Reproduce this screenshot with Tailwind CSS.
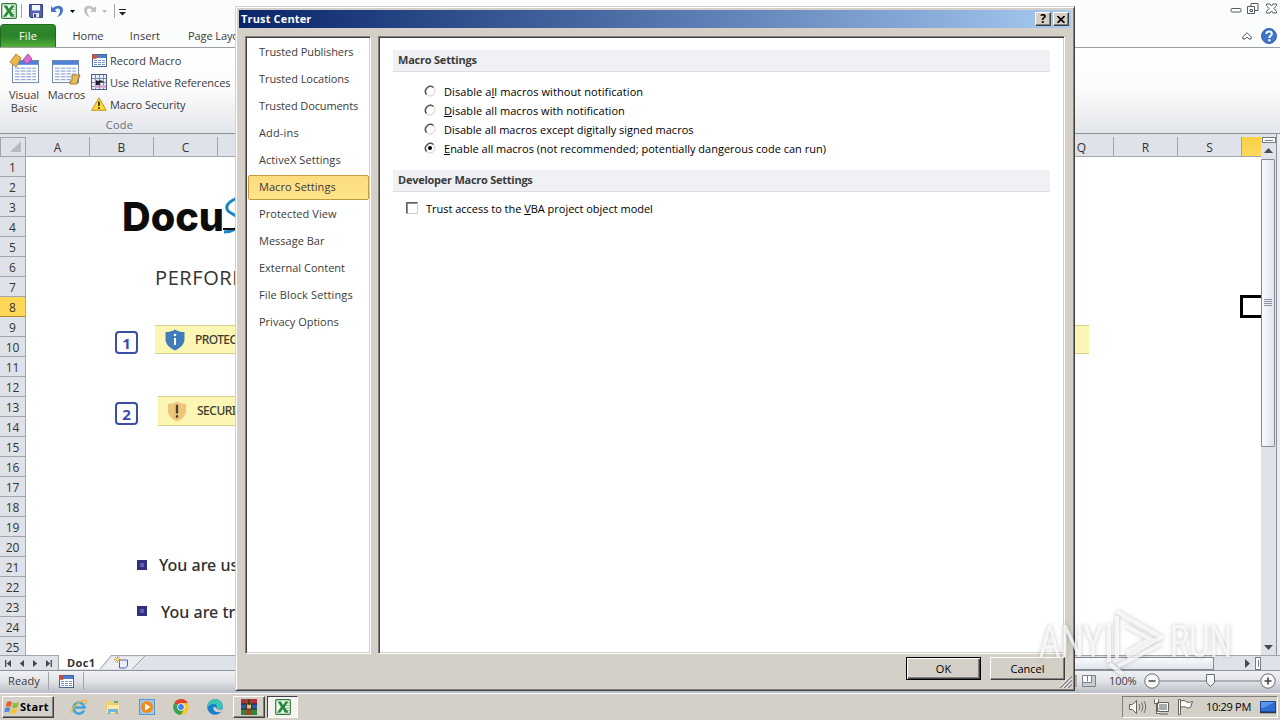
<!DOCTYPE html>
<html lang="en">
<head>
  <meta charset="UTF-8">
  <title>Trust Center</title>
  <script src="https://cdn.jsdelivr.net/npm/@tailwindcss/browser@4"></script>
</head>
<body class="relative w-[1280px] h-[720px] overflow-hidden bg-white font-['Open_Sans','Noto_Sans',sans-serif] text-[11px] text-[#3b3b3b]">
  <!-- shared icons -->
  <svg class="hidden">
    <symbol id="excel" viewBox="0 0 16 16">
      <rect x=".7" y=".7" width="14.6" height="14.6" rx="1" fill="#f1f8ef" stroke="#2c7a37" stroke-width="1.2"/>
      <path d="M11 4h3M11 6.500h3M11 9h3M11 11.500h3" stroke="#8cbd8f"/>
      <path d="M2.500 2.500h3.600l2 3.500 2.200-3.500h3.200L9.800 8l3.900 5.700h-3.800L7.700 10l-2.400 3.700H1.800L6 8z" fill="#278a3b"/>
    </symbol>
    <symbol id="table" viewBox="0 0 28 26">
      <rect x=".5" y=".5" width="27" height="23" fill="#fff" stroke="#6b82ab"/>
      <path d="M1 1h26v4H1z" fill="#4c83d8"/>
      <path d="M3 8.500h22M3 11.500h22M3 14.500h22M3 17.500h22M3 20.500h22" stroke="#7593c7" stroke-dasharray="5 1"/>
    </symbol>
    <symbol id="recmacro" viewBox="0 0 16 14">
      <rect x="1.500" y="1.500" width="14" height="12" fill="#fff" stroke="#45649b"/>
      <path d="M2 2h13v3H2z" fill="#4f80ce"/>
      <path d="M3 7.500h11M3 9.500h11M3 11.500h11" stroke="#7593c7" stroke-dasharray="3 1"/>
      <circle cx="3.500" cy="3.500" r="2.500" fill="#c8503c"/>
    </symbol>
    <symbol id="radio" viewBox="0 0 12 12">
      <circle cx="6" cy="6" r="5" fill="#fff" stroke="#d4d0c8"/>
      <path d="M2.500 9.500A5 5 0 0 1 9.500 2.500" fill="none" stroke="#555" stroke-width="1.500"/>
    </symbol>
  </svg>

  <div class="flex flex-col h-full">
    <!-- quick access bar -->
    <div class="flex justify-between h-6 bg-[#fbfcfc] shrink-0">
      <div class="flex items-center pl-px h-[22px]">
        <svg class="size-4" viewBox="0 0 16 16"><use href="#excel"/></svg>
        <i class="w-px h-3.5 ml-1 bg-[#a0a4aa]"></i>
        <svg class="size-[14px] ml-[7px]" viewBox="0 0 14 14"><path d="M.5.5h13v13h-12l-1-1z" fill="#5360b4" stroke="#34407f"/><path d="M3 1h8v5.500H3z" fill="#f2f5fb"/><path d="M4 9h6v4.500H4z" fill="#dfe4f0"/><path d="M5 10h2v3H5z" fill="#34407f"/></svg>
        <svg class="w-[13px] h-[13px] ml-2" viewBox="0 0 13 13"><path d="M0 1v6h6L4 5c2-2 5-2 5 1 0 2-1 4-3 6 4-1 6-4 6-7C12 1 7-1 2 3z" fill="#4675c9"/></svg>
        <svg class="w-[5px] h-[3px] ml-[6px]" viewBox="0 0 5 3"><path d="M0 0h5L2.500 3z" fill="#000"/></svg>
        <svg class="w-[13px] h-[13px] ml-2" viewBox="0 0 13 13"><path d="M13 1v6H7l2-2C7 3 4 3 4 6c0 2 1 4 3 6-4-1-6-4-6-7 0-4 5-6 10-2z" fill="#bfc1c5"/></svg>
        <svg class="w-[5px] h-[3px] ml-[6px]" viewBox="0 0 5 3"><path d="M0 0h5L2.500 3z" fill="#b9bbbf"/></svg>
        <i class="w-px h-3.5 ml-[7px] bg-[#a0a4aa]"></i>
        <svg class="w-[7px] h-[7px] ml-1 mt-0.5" viewBox="0 0 7 7"><path d="M0 .5h7" stroke="#222"/><path d="M0 3h7L3.500 6.500z" fill="#222"/></svg>
      </div>
      <svg class="w-[50px] h-[18px]" viewBox="0 0 50 18" fill="#fff" stroke="#555b64">
        <rect x="1" y="8.500" width="10" height="3.500" rx="1"/>
        <path d="M21 3.500h7v7h-7z"/><path d="M17.500 6.500h7v7h-7z"/><path d="M20 9.500h2.500v2H20z"/>
        <path d="M36.500 4h3.500l1.500 2 1.500-2h3.500v1.500L44 8.500l2.500 3V13H43l-1.500-2L40 13h-3.500v-1.500l2.500-3-2.500-3z"/>
      </svg>
    </div>

    <!-- ribbon tabs -->
    <div class="flex justify-between h-[23px] bg-[#fbfcfc] shrink-0">
      <div class="flex items-center">
        <div class="flex items-center justify-center w-14 h-[23px] rounded-t border border-b-0 border-[#216b22] bg-linear-to-b from-[#2e8a2d] via-[#2a8129] to-[#55b03c] text-white tracking-[.2px]">File</div>
        <span class="w-16 pt-0.5 text-center">Home</span>
        <span class="w-[50px] pt-0.5 text-center tracking-[.1px]">Insert</span>
        <span class="pl-[18px] pt-0.5 whitespace-nowrap tracking-[-.1px]">Page Layout</span>
      </div>
      <div class="flex items-center gap-[9px] pr-[3px]">
        <svg class="w-[10px] h-[8px]" viewBox="0 0 10 8"><path d="M5 .7 9.200 5v2H7L5 5 3 7H.8V5z" fill="#fff" stroke="#555b64"/></svg>
        <svg class="size-4" viewBox="0 0 16 16"><circle cx="8" cy="8" r="7.500" fill="#3f74cb" stroke="#3363af"/><path d="M5.300 6C5.300 2.500 11 2.600 10.800 6 10.700 8 8.300 7.800 8.300 10" stroke="#fff" stroke-width="2" fill="none"/><circle cx="8.300" cy="12.300" r="1.200" fill="#fff"/></svg>
      </div>
    </div>

    <!-- ribbon -->
    <div class="h-[87px] shrink-0 border-t border-[#9b9fa5] border-b border-b-[#8b9097] bg-linear-to-b from-white via-[#fbfbfc] to-[#e3e6ea]">
      <div class="flex w-[239px] leading-[13px]">
        <div class="w-12 pt-[5px] flex flex-col items-center text-center">
          <svg class="w-[32px] h-[32px]" viewBox="0 0 32 32">
            <svg x="4" y="7" width="27" height="25"><use href="#table"/></svg>
            <path d="m8 1 5 4-5 9-6-5z" fill="#e9b650" stroke="#b98a2e"/><path d="m20 1 4 5-5 5-4-4z" fill="#e06bd0" stroke="#b44ba6"/>
          </svg>
          <span class="mt-[3px]">Visual<br>Basic</span>
        </div>
        <div class="w-[37px] pt-[5px] flex flex-col items-center">
          <svg class="w-[29px] h-[32px]" viewBox="0 0 29 32">
            <svg x="0" y="7" width="27" height="25"><use href="#table"/></svg>
            <path d="M20 22h8l-1 3h-1l-1 6h-7v-3h2z" fill="#e9bf5c" stroke="#a9762a"/>
          </svg>
          <span class="mt-[3px]">Macros</span>
        </div>
        <div class="flex flex-col pt-px pl-[6px] whitespace-nowrap">
          <div class="flex items-center h-[22px] gap-[3px]"><svg class="w-4 h-[14px]"><use href="#recmacro"/></svg>Record Macro</div>
          <div class="flex items-center h-[22px] gap-[3px] tracking-[-.08px]">
            <svg class="w-4 h-4" viewBox="0 0 16 16"><rect x=".5" y=".5" width="15" height="15" fill="#e9eef8" stroke="#4d608c"/><path d="M4.500 1v14M8.500 1v14M12.500 1v14M1 4.500h14M1 8.500h14M1 12.500h14" stroke="#7c8db5"/><path d="M5 9V6l2 1q4-2 6 2-3-1.500-4.500.5l1.500 1.500H5z" fill="#241a2c"/><path d="M3.500 11h4v3h-4zM10.500 11h4v3h-4z" fill="#e3a7cb"/></svg>Use Relative References</div>
          <div class="flex items-center h-[22px] gap-[3px] tracking-[-.05px]"><svg class="w-4 h-[14px]" viewBox="0 0 16 14"><path d="M8 .8 15.300 13.300H.7z" fill="#ffd83c" stroke="#c6921c" stroke-linejoin="round"/><path d="M8 4.500v4.500M8 10.300v1.700" stroke="#222" stroke-width="1.600"/></svg>Macro Security</div>
        </div>
      </div>
      <div class="w-[239px] text-center text-[#6d7179] leading-[15px] tracking-[.3px] pt-0.5">Code</div>
    </div>

    <!-- worksheet -->
    <div class="flex h-[521px] shrink-0 bg-[#dfe2e8]">
      <div class="w-[1261px] flex flex-col overflow-hidden">
        <div class="flex h-[23px] pt-[3px] border-b border-[#a1a6ae] shrink-0 text-xs text-[#333]">
          <div class="w-[26px] shrink-0 border-l border-t border-r border-[#a1a6ae] flex items-end justify-end p-[4px]">
            <svg class="size-[11px]" viewBox="0 0 11 11"><path d="M11 0v11H0z" fill="#b6bac1"/></svg>
          </div>
          <div id="cols" class="flex"></div>
        </div>
        <div class="flex h-[498px] overflow-hidden">
          <div id="rows" class="w-[26px] shrink-0 border-r border-[#a1a6ae] text-xs text-[#333]"></div>
          <div class="relative flex-1 bg-white overflow-hidden">
            <div class="flex flex-col items-start w-[260px] pl-[89px] pt-[35px] whitespace-nowrap">
              <svg class="w-[145px] h-[50px]" viewBox="0 0 145 50" fill="none">
                <text x="7" y="39" font-family="Inter, sans-serif" font-size="40" font-weight="800" fill="#0c0c0c" textLength="102" lengthAdjust="spacingAndGlyphs">Docu</text>
                <path d="M133 4C122 5 110 10 112 17c1 5 14 6 13 14-1 5-8 9-16 9" stroke="#1b86c6" stroke-width="3"/><path d="M108 37h16" stroke="#111" stroke-width="2"/>
              </svg>
              <div class="pl-10 pt-[21px] text-xl leading-[30px] h-[51px] text-[#333] tracking-[.6px]">PERFORM</div>
              <div class="flex pt-[32px] h-[61px]">
                <div class="mt-[6px] size-[23px] rounded border-2 border-[#3a4fa3] text-[#3a4fa3] font-bold text-[15px] leading-[20px] text-center">1</div>
                <div class="ml-[17px] w-[934px] h-[29px] bg-[#fcf6b4] border-y border-[#d7cf90] flex items-center text-[#3c3c31] text-xs font-['Noto_Sans',sans-serif] font-medium shrink-0">
                  <svg class="w-5 h-[22px] ml-[10px]" viewBox="0 0 20 22"><path d="M10 .5c3 2 6 2.500 9.500 2.500v7c0 5-4 9-9.500 11.500C4.500 19 .5 15 .5 10V3C4 3 7 2.500 10 .5z" fill="#407cba"/><path d="M10 9v7" stroke="#fff" stroke-width="2"/><circle cx="10" cy="6" r="1.300" fill="#fff"/></svg>
                  <span class="ml-[10px] tracking-[-.6px]">PROTECTED VIEW</span>
                </div>
              </div>
              <div class="flex pt-[42px] h-[80px]">
                <div class="mt-[6px] size-[23px] rounded border-2 border-[#3a4fa3] text-[#3a4fa3] font-bold text-[15px] leading-[20px] text-center">2</div>
                <div class="ml-[20px] w-[300px] h-[30px] bg-[#fcf6b4] border-y border-[#d7cf90] flex items-center text-[#3c3c31] text-xs font-['Noto_Sans',sans-serif] font-medium shrink-0">
                  <svg class="w-5 h-[21px] ml-[9px]" viewBox="0 0 20 22"><path d="M10 .5c3 2 6 2.500 9.500 2.500v7c0 5-4 9-9.500 11.500C4.500 19 .5 15 .5 10V3C4 3 7 2.500 10 .5z" fill="#edc57b"/><path d="M10 4v9M10 15v2.500" stroke="#48402f" stroke-width="2.400"/></svg>
                  <span class="ml-[10px] tracking-[-.5px]">SECURITY WARNING</span>
                </div>
              </div>
              <div class="flex items-center h-[30px] mt-[116px] ml-[22px] text-base font-['Noto_Sans',sans-serif] font-medium text-[#303030]">
                <i class="size-[10px] border-[3px] border-[#302f80] bg-[#5f60ad]"></i><span class="ml-[12px]">You are using</span>
              </div>
              <div class="flex items-center h-[30px] mt-[16px] ml-[22px] text-base font-['Noto_Sans',sans-serif] font-medium text-[#303030]">
                <i class="size-[10px] border-[3px] border-[#302f80] bg-[#5f60ad]"></i><span class="ml-[14px] pt-px">You are trying</span>
              </div>
            </div>
            <!-- active cell -->
            <div class="absolute left-[1214px] top-[138px] w-[66px] h-[23px] border-[3px] border-black"></div>
          </div>
        </div>
      </div>
      <!-- vertical scrollbar -->
      <div class="w-[16px] border-r border-[#8b9097] flex flex-col items-center pt-[3px]">
        <div class="w-[14px] h-[6px] border border-[#767b85] bg-white flex items-center justify-center"><i class="w-2 h-px bg-[#767b85]"></i></div>
        <svg class="w-[9px] h-[5px] mt-[5px]" viewBox="0 0 9 5"><path d="M4.500 0 9 5H0z" fill="#444b59"/></svg>
        <div class="w-[14px] self-start h-[288px] mt-[6px] border border-[#858a95] rounded-[1px] bg-linear-to-r from-[#fbfbfd] to-[#dfe3ed] flex flex-col items-center pt-[139px] gap-px">
          <i class="w-2 h-px bg-[#8a92a8]"></i><i class="w-2 h-px bg-[#8a92a8]"></i><i class="w-2 h-px bg-[#8a92a8]"></i><i class="w-2 h-px bg-[#8a92a8]"></i>
        </div>
        <svg class="w-[9px] h-[5px] mt-auto mb-[5px]" viewBox="0 0 9 5"><path d="M0 0h9L4.500 5z" fill="#444b59"/></svg>
      </div>
      <div class="flex-1 bg-[#e9ecf0]"></div>
    </div>

    <!-- sheet tabs -->
    <div class="flex h-[15px] shrink-0 border-t border-[#a1a6ae] bg-[#dfe2e8]">
      <div class="flex items-center w-[59px] border-r border-[#a1a6ae] pl-[5px]">
        <svg class="w-[48px] h-[7px]" viewBox="0 0 48 7" fill="#41464f"><path d="M0 0h1.300v7H0zM6 0v7L1.800 3.500zM19 0v7l-4.200-3.500zM28 0v7l4.200-3.500zM41 0v7l4.200-3.500zM45.600 0h1.300v7h-1.300z"/></svg>
      </div>
      <svg class="w-[86px] h-[14px] overflow-visible" viewBox="0 0 86 14">
        <path d="M0-1h52L41 13H0z" fill="#fff"/>
        <path d="M53 1h31L73 13H43z" fill="#eceef2"/><path d="M52 0 41 13M86 0 73 13" stroke="#a1a6ae" fill="none"/>
        <path d="M60.500 4h8v6l-2 2h-6z" fill="#e8eefb" stroke="#5068a2"/><path d="M58.500 0v7M55 3.500h7M56 1l5 5M61 1l-5 5" stroke="#d79a34"/><circle cx="58.500" cy="3.500" r="1.200" fill="#fff4b0"/>
        <text x="8" y="11" font-size="11" font-weight="700" fill="#333" textLength="28">Doc1</text>
      </svg>
      <div class="ml-auto flex items-center h-[14px] w-[206px]">
        <div class="w-[140px] h-[13px] border border-[#858a95] bg-linear-to-b from-[#fbfbfd] to-[#dfe3ed]"></div>
        <svg class="w-[5px] h-[9px] ml-[31px]" viewBox="0 0 5 9"><path d="M0 0v9l5-4.500z" fill="#444b59"/></svg>
        <div class="w-[6px] h-[13px] ml-[5px] border border-[#767b85] bg-white flex items-center justify-center"><i class="w-px h-[7px] bg-[#767b85]"></i></div>
      </div>
    </div>

    <!-- status bar -->
    <div class="flex items-center justify-between h-[23px] shrink-0 border-t border-[#8b9097] bg-linear-to-b from-[#f1f2f4] via-[#dfe1e5] to-[#b9bdc5] pb-0.5">
      <div class="flex items-center pl-2 tracking-[.1px]">
        Ready
        <i class="w-px h-[18px] ml-[8px] bg-[#a1a6ae]"></i>
        <svg class="w-4 h-[14px] ml-[9px]"><use href="#recmacro"/></svg>
        <i class="w-px h-[18px] ml-[9px] bg-[#a1a6ae]"></i>
      </div>
      <div class="flex items-center pr-[4px]">
        <svg class="w-[34px] h-[12px] mr-[13px]" viewBox="0 0 34 12" fill="#c9ccd1" stroke="#7d828a"><path d="M-4 .5h18v11H-4zM20.500.5h13v11h-13z"/><path d="M21 1h8v6h-8z" fill="#fff" stroke="none"/><path d="M25.500.5v6M21 7.500h8.500v-7" fill="none"/></svg>
        <span class="w-[28px] tracking-[-.1px]">100%</span>
        <svg class="w-[132px] h-4 ml-[7px]" viewBox="0 0 132 16">
          <path d="M16 8h100" stroke="#777c85"/>
          <circle cx="8" cy="8" r="7.200" fill="#fafafa" stroke="#666b74"/><circle cx="124" cy="8" r="7.200" fill="#fafafa" stroke="#666b74"/>
          <path d="M4.500 8h7M120.500 8h7M124 4.500v7" stroke="#444" stroke-width="1.600"/>
          <path d="M62.500 1.500h8v8l-4 4-4-4z" fill="#f5f5f7" stroke="#666b74"/>
        </svg>
      </div>
    </div>

    <!-- taskbar -->
    <div class="flex items-center flex-1 bg-[#d4d0c8] border-t border-white text-black">
      <div class="flex items-center w-[52px] h-[22px] ml-[2px] border border-t-white border-l-white border-r-[#404040] border-b-[#404040] shadow-[inset_-1px_-1px_#808080]">
        <svg class="w-[16px] h-[15px] ml-px" viewBox="0 0 16 15"><path d="M3 2q3-1.500 5 0L6.500 7Q4 5.500 1.500 7z" fill="#e75b2b"/><path d="M9 2.500q3 1.500 6-.5L13.500 7q-3 2-5.500.5z" fill="#8dbb3b"/><path d="M1.300 8q2.500-1.500 5 0L5 12.500Q3 11 0 12.500z" fill="#4d8be0"/><path d="M7.500 8.500q3 1.500 5.700-.3L12 13q-3 2-6 .3z" fill="#f5c52c"/></svg>
        <span class="font-bold tracking-[.3px]">Start</span>
      </div>
      <svg class="size-4 ml-[17px]" viewBox="0 0 16 16"><path d="M13 11.500A5.500 5.500 0 1 1 13.500 8.500H4" fill="none" stroke="#40a4dd" stroke-width="2.600"/><path d="M1 14C-1 10 10 0 15 1.500c1.500 1-.5 3-1.500 4" fill="none" stroke="#e8b92e" stroke-width="1.300"/></svg>
      <svg class="size-4 ml-[18px]" viewBox="0 0 16 16"><path d="M1 2h5l1 2h8v11H1z" fill="#efcf70"/><path d="M2 6h12v8H2z" fill="#faeaa5"/><path d="M3 10h10v5h-2.500v-2h-5v2H3z" fill="#6cb4e4"/><path d="M9 2h4v2H9z" fill="#60ad63"/></svg>
      <svg class="size-4 ml-[18px]" viewBox="0 0 16 16"><rect x=".5" y=".5" width="15" height="15" fill="#9ccaec" stroke="#5a96c8"/><circle cx="8" cy="8" r="6" fill="#f28a1a"/><path d="M6 4.500v7L11.500 8z" fill="#fff"/></svg>
      <svg class="size-4 ml-[18px]" viewBox="0 0 16 16"><circle cx="8" cy="8" r="7.800" fill="#f9c623"/><path d="M8 8 1.200 4.100A7.800 7.800 0 0 1 14.800 4.100H8z" fill="#df4030"/><path d="M1.200 4.100A7.800 7.800 0 0 0 8 15.800L11 10 8 8z" fill="#35a352"/><circle cx="8" cy="8" r="3.700" fill="#fff"/><circle cx="8" cy="8" r="2.900" fill="#4180ea"/></svg>
      <svg class="size-4 ml-[18px]" viewBox="0 0 16 16"><circle cx="8" cy="8" r="7.800" fill="#1a80ce"/><path d="M1 5C4-2 16-1 15.700 7c0 3-4 4-6 3 1-2 0-5-3-5S1 7 .3 9z" fill="#3cc5b1"/><path d="M6.500 8c-1 4 3 6.500 8 4.500l1.500-3c-3 2-7 1.500-6.500-1z" fill="#d4d0c8"/></svg>
      <div class="flex items-center justify-center w-8 h-[22px] ml-[10px] border border-t-white border-l-white border-r-[#404040] border-b-[#404040] shadow-[inset_-1px_-1px_#808080]">
        <svg class="size-4" viewBox="0 0 16 16"><path d="M0 0h16v5H0z" fill="#b22e45"/><path d="M0 5h16v5H0z" fill="#3159a9"/><path d="M0 10h16v6H0z" fill="#37833c"/><path d="M5 0h6v16H5z" fill="#934a26"/><path d="M5.500 5h5v5h-5z" fill="#e0c870" stroke="#332"/><path d="M8 0v6M0 5h5M11 5h5M0 10h5M11 10h5" stroke="#222"/></svg>
      </div>
      <div class="flex items-center justify-center w-[31px] h-[22px] ml-[2px] bg-[#f5f4f1] border border-t-[#404040] border-l-[#404040] border-r-white border-b-white">
        <svg class="size-4" viewBox="0 0 16 16"><use href="#excel"/></svg>
      </div>
      <div class="flex items-center ml-auto mr-[2px] w-[156px] h-[22px] border border-t-[#808080] border-l-[#808080] border-r-white border-b-white pl-[6px]">
        <svg class="w-[65px] h-4 shrink-0" viewBox="0 0 65 16" fill="#fafafa" stroke="#64625e">
          <path d="M.5 5.500h3l4-4v13l-4-4h-3z"/><path d="M10 5q2 3 0 6M12.500 3.500q3 4.500 0 9M15 2q3.500 6 0 12" fill="none" stroke-width=".9"/>
          <path d="M28.500 3.500h11v9h-11zM31 15h8M25.500.5v4h4v-4M27.500 4.500v10h4" /><path d="M30 5h8v6h-8z" fill="#aaa" stroke="none"/>
          <path d="M49.500.5h2v15h-2zM51.500 2q4-2 6 1 3 1 6-.5l-2 6q-3 1.500-5-.5-2-1-5 .5z"/>
        </svg>
        <span class="ml-[12px] w-[46px] shrink-0 whitespace-nowrap tracking-[-.3px]">10:29 PM</span>
        <svg class="w-4 h-[15px] ml-[8px] shrink-0" viewBox="0 0 16 15"><path d="M.5 1.500h15v10.500H.5z" fill="#2d6ed3" stroke="#1b4692"/><path d="M1 2h14L3 8H1z" fill="#5c95ea"/><path d="M0 12.500h16" stroke="#23324f" stroke-width="1.500"/></svg>
      </div>
    </div>
  </div>

  <!-- Trust Center dialog -->
  <div class="absolute left-[235px] top-[6px] w-[840px] h-[685px] bg-[#d4d0c8] border border-t-[#d4d0c8] border-l-[#d4d0c8] border-r-[#404040] border-b-[#404040] shadow-[inset_1px_1px_#fff,inset_-1px_-1px_#808080] flex flex-col p-[3px]">
    <div class="flex items-center h-[18px] shrink-0 bg-linear-to-r from-[#0a246a] to-[#a6caf0] pl-[2px] pr-[2px] text-white font-bold">
      <span class="tracking-[.15px]">Trust Center</span>
      <div class="ml-auto w-4 h-[14px] bg-[#d4d0c8] border border-t-white border-l-white border-r-[#404040] border-b-[#404040] shadow-[inset_-1px_-1px_#808080] text-black text-xs leading-[12px] text-center">?</div>
      <div class="ml-[2px] w-4 h-[14px] bg-[#d4d0c8] border border-t-white border-l-white border-r-[#404040] border-b-[#404040] shadow-[inset_-1px_-1px_#808080] flex items-center justify-center">
        <svg class="w-[8px] h-[7px]" viewBox="0 0 8 7"><path d="M.5 0 7.500 7M7.500 0 .5 7" stroke="#000" stroke-width="1.600"/></svg>
      </div>
    </div>
    <div class="flex h-[618px] mt-[8px] ml-[6px]">
      <div class="w-[126px] bg-white border border-t-[#808080] border-l-[#808080] border-r-white border-b-white shadow-[inset_1px_1px_#404040,inset_-1px_-1px_#d4d0c8] pt-[2px] pl-[2px] pr-px whitespace-nowrap">
        <div class="h-[27px] flex items-center pl-[11px] tracking-[-.07px]">Trusted Publishers</div>
        <div class="h-[27px] flex items-center pl-[11px] tracking-[-.07px]">Trusted Locations</div>
        <div class="h-[27px] flex items-center pl-[11px] tracking-[-.12px]">Trusted Documents</div>
        <div class="h-[27px] flex items-center pl-[11px] tracking-[.15px]">Add-ins</div>
        <div class="h-[27px] flex items-center pl-[11px] tracking-[.07px]">ActiveX Settings</div>
        <div class="h-[25px] my-px flex items-center pl-[10px] rounded-[2px] border border-[#c29b3d] bg-linear-to-b from-[#fddc7e] to-[#ffe48b] tracking-[.05px]">Macro Settings</div>
        <div class="h-[27px] flex items-center pl-[11px] tracking-[.05px]">Protected View</div>
        <div class="h-[27px] flex items-center pl-[11px]">Message Bar</div>
        <div class="h-[27px] flex items-center pl-[11px]">External Content</div>
        <div class="h-[27px] flex items-center pl-[11px] tracking-[.12px]">File Block Settings</div>
        <div class="h-[27px] flex items-center pl-[11px]">Privacy Options</div>
      </div>
      <div class="w-[687px] ml-[7px] bg-white border border-t-[#808080] border-l-[#808080] border-r-white border-b-white shadow-[inset_1px_1px_#404040,inset_-1px_-1px_#d4d0c8] pl-[14px] pt-[13px] text-black whitespace-nowrap">
        <div class="w-[657px] h-[22px] bg-[#eff1f4] border-b border-[#dcdee3] flex items-center pl-[5px] font-bold text-[#3b3b3b] tracking-[-.22px]">Macro Settings</div>
        <div class="pt-[11px] pl-[31px] text-black">
          <div class="flex items-center h-[19px]"><svg class="size-3 mr-2 -mt-[3px]" viewBox="0 0 12 12"><use href="#radio"/></svg><span class="tracking-[.08px]">Disable a<u>l</u>l macros without notification</span></div>
          <div class="flex items-center h-[19px]"><svg class="size-3 mr-2 -mt-[3px]" viewBox="0 0 12 12"><use href="#radio"/></svg><span class="tracking-[.06px]"><u>D</u>isable all macros with notification</span></div>
          <div class="flex items-center h-[19px]"><svg class="size-3 mr-2 -mt-[3px]" viewBox="0 0 12 12"><use href="#radio"/></svg><span>Disable all macros except di<u>g</u>itally signed macros</span></div>
          <div class="flex items-center h-[19px]"><svg class="size-3 mr-2 -mt-[3px]" viewBox="0 0 12 12"><use href="#radio"/><circle cx="6" cy="6" r="2" fill="#000"/></svg><span><u>E</u>nable all macros (not recommended; potentially dangerous code can run)</span></div>
        </div>
        <div class="w-[657px] h-[22px] mt-[11px] bg-[#eff1f4] border-b border-[#dcdee3] flex items-center pl-[5px] font-bold text-[#3b3b3b] tracking-[-.25px]">Developer Macro Settings</div>
        <div class="flex items-center h-[18px] mt-[8px] pl-[13px]">
          <i class="size-3 -mt-0.5 border border-t-[#606060] border-l-[#606060] border-r-[#d4d0c8] border-b-[#d4d0c8] shadow-[inset_1px_1px_#909090] mr-2"></i>
          <span class="tracking-[-.02px]">Trust access to the <u>V</u>BA project object model</span>
        </div>
      </div>
    </div>
    <div class="flex justify-end gap-[9px] pt-[3px] pr-[6px] text-black">
      <div class="w-[75px] h-[23px] border border-black shadow-[inset_1px_1px_#fff,inset_-1px_-1px_#404040,inset_-2px_-2px_#808080] flex items-center justify-center pt-px">OK</div>
      <div class="w-[75px] h-[23px] border border-t-white border-l-white border-r-[#404040] border-b-[#404040] shadow-[inset_-1px_-1px_#808080] flex items-center justify-center pt-px">Cancel</div>
    </div>
    <svg class="absolute right-[2px] bottom-[2px] size-[12px]" viewBox="0 0 12 12"><path d="M0 12 12 0M4 12l8-8M8 12l4-4" stroke="#808080" stroke-width="1.500"/><path d="M-1.500 12 12-1.500M2.500 12 12 2.500M6.500 12 12 6.500" stroke="#fff"/></svg>
  </div>

  <!-- watermark -->
  <svg class="absolute left-[1034px] top-[604px] w-[206px] h-[72px] drop-shadow-[0_0_2px_rgba(0,0,0,.3)]" viewBox="0 0 206 72" fill="#fff" fill-opacity=".75" font-family="Roboto">
    <text x="5" y="53" font-size="44" textLength="64" lengthAdjust="spacingAndGlyphs">ANY</text>
    <text x="136" y="53" font-size="44" textLength="62" lengthAdjust="spacingAndGlyphs">RUN</text>
    <path d="M75 58V20M83 12v42M83 8 127 33 93 53M92 22l24 13-24 14M84 62 127 40M75 60l14 10" fill="none" stroke="#fff" stroke-opacity=".75" stroke-width="4"/>
  </svg>

  <script>
    const cols = document.getElementById('cols');
    'ABCDEFGHIJKLMNOPQRST'.split('').forEach((c) => {
      const el = document.createElement('div');
      el.className = 'w-16 shrink-0 border-r border-[#a1a6ae] flex items-center justify-center pt-0.5';
      // columns D to P are behind the dialog
      if (c === 'T') {
        el.className = 'w-16 shrink-0 bg-linear-to-b from-[#fbd043] to-[#ffd95e]';
      } else if (c < 'D' || c > 'P') {
        el.textContent = c;
      }
      cols.appendChild(el);
    });

    const rows = document.getElementById('rows');
    for (let i = 1; i <= 25; i++) {
      const el = document.createElement('div');
      el.className = i === 8
        ? 'h-5 pt-0.5 border-b border-[#b58a2b] bg-[#ffd758] flex items-center justify-center'
        : 'h-5 pt-0.5 border-b border-[#a1a6ae] flex items-center justify-center';
      el.textContent = i;
      rows.appendChild(el);
    }
  </script>
</body>
</html>
